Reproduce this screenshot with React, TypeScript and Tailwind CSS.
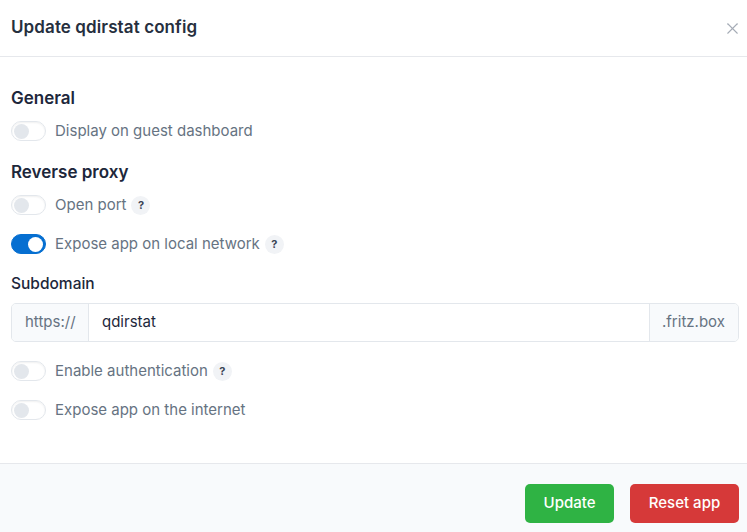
import { X } from "lucide-react"

function Toggle({ on = false }: { on?: boolean }) {
  return (
    <div
      className={
        on
          ? "w-[35px] h-[20px] rounded-full bg-[#066fd1] border border-[#066fd1] flex items-center justify-end px-[2px] shrink-0"
          : "w-[35px] h-[20px] rounded-full bg-white border border-[#e3e7ec] shadow-[inset_0_1px_2px_rgba(0,0,0,0.06)] flex items-center px-[2px] shrink-0"
      }
    >
      <div className={on ? "w-[15px] h-[15px] rounded-full bg-white" : "w-[15px] h-[15px] rounded-full bg-[#e3e7ec]"} />
    </div>
  )
}

function Help() {
  return (
    <span className="ml-[5px] w-[19px] h-[19px] rounded-full bg-[#f1f3f6] text-[#3a4455] text-[11px] font-bold flex items-center justify-center">
      ?
    </span>
  )
}

function Row({ label, on, help }: { label: string; on?: boolean; help?: boolean }) {
  return (
    <div className="flex items-center h-[20px]">
      <Toggle on={on} />
      <span className="ml-[9px] text-[15px] text-[#667382]">{label}</span>
      {help && <Help />}
    </div>
  )
}

function App() {
  return (
    <div className="w-[747px] h-[532px] bg-white flex flex-col overflow-hidden font-[family-name:Inter,sans-serif]">
      <div className="h-[57px] shrink-0 flex items-center justify-between pl-[11px] pr-[5px] border-b border-[#e6e8ec]">
        <h1 className="text-[17px] font-semibold tracking-[0.1px] text-[#262f3e]">Update qdirstat config</h1>
        <X className="w-[19px] h-[19px] text-[#a5acb6]" strokeWidth={1.4} />
      </div>

      <div className="flex-1 pl-[11px] pr-[8px] pt-[30px]">
        <h2 className="text-[17px] font-semibold text-[#1d273b] leading-[22px]">General</h2>
        <div className="mt-[12px]">
          <Row label="Display on guest dashboard" />
        </div>

        <h2 className="mt-[20px] text-[17px] font-semibold text-[#1d273b] leading-[22px]">Reverse proxy</h2>
        <div className="mt-[12px] flex flex-col gap-[19px]">
          <Row label="Open port" help />
          <Row label="Expose app on local network" on help />
        </div>

        <div className="mt-[20px] text-[15.5px] font-medium text-[#1d273b] leading-[20px]">Subdomain</div>
        <div className="mt-[9px] h-[39px] flex rounded-[5px] border border-[#e3e7ec] overflow-hidden text-[15px]">
          <div className="w-[77px] shrink-0 bg-[#f8fafc] border-r border-[#e3e7ec] flex items-center pl-[13px] text-[#667382]">
            https://
          </div>
          <div className="flex-1 flex items-center pl-[13px] text-[#1d273b]">qdirstat</div>
          <div className="w-[89px] shrink-0 bg-[#f8fafc] border-l border-[#e3e7ec] flex items-center pl-[12px] text-[#667382]">
            .fritz.box
          </div>
        </div>

        <div className="mt-[19px] flex flex-col gap-[19px]">
          <Row label="Enable authentication" help />
          <Row label="Expose app on the internet" />
        </div>
      </div>

      <div className="h-[69px] shrink-0 bg-[#f8fafc] border-t border-[#e6e8ec] flex items-start justify-end gap-[16px] pt-[20px] pr-[8px]">
        <button className="h-[39px] w-[89px] rounded-[5px] bg-[#2fb344] text-white text-[15px] font-medium">
          Update
        </button>
        <button className="h-[39px] w-[109px] rounded-[5px] bg-[#d63939] text-white text-[15px] font-medium">
          Reset app
        </button>
      </div>
    </div>
  )
}

export default App
